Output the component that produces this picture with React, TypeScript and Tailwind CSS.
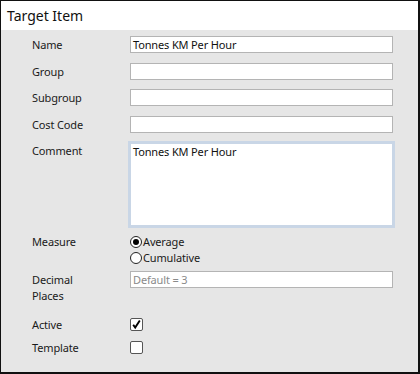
import React from "react";

const font = { fontFamily: '"Segoe UI", "Noto Sans", sans-serif' };

function Label({ children }: { children: React.ReactNode }) {
  return <div className="w-[98px] shrink-0 text-[11px] tracking-[-0.15px] leading-[17px] text-[#1a1a1a]">{children}</div>;
}

function TextInput({ value, placeholder }: { value?: string; placeholder?: string }) {
  return (
    <div className="w-[263px] h-[17px] border border-[#b4b4b4] bg-white px-[2px] text-[11px] tracking-[-0.15px] leading-[15px] text-[#111]">
      {value ? value : <span className="text-[#8a8a8a]">{placeholder}</span>}
    </div>
  );
}

function Radio({ checked, label }: { checked?: boolean; label: string }) {
  return (
    <div className="flex items-center h-[12px] text-[11px] tracking-[-0.15px] leading-[12px] text-[#1a1a1a]">
      <div className="w-[12px] h-[12px] rounded-full border border-[#222] bg-white flex items-center justify-center">
        {checked && <div className="w-[6px] h-[6px] rounded-full bg-black" />}
      </div>
      <span className="ml-[1px]">{label}</span>
    </div>
  );
}

function Checkbox({ checked }: { checked?: boolean }) {
  return (
    <div className="w-[13px] h-[13px] rounded-[2px] border border-[#555] bg-white flex items-center justify-center">
      {checked && (
        <svg width="11" height="11" viewBox="0 0 11 11">
          <path d="M2.2 5.8 L4.2 8.6 L8.8 1.6" fill="none" stroke="#000" strokeWidth="1.9" />
        </svg>
      )}
    </div>
  );
}

export default function App() {
  return (
    <div style={font} className="w-[420px] h-[374px] flex flex-col border-l border-t border-r-2 border-b-2 border-[#111] bg-[#e6e6e6]">
      <div className="h-[29px] bg-white pl-[6px] text-[14px] leading-[29px] text-[#111]">Target Item</div>
      <div className="flex flex-col pl-[31px] pt-[6px]">
        <div className="flex">
          <Label>Name</Label>
          <TextInput value="Tonnes KM Per Hour" />
        </div>
        <div className="flex mt-[10px]">
          <Label>Group</Label>
          <TextInput />
        </div>
        <div className="flex mt-[9px]">
          <Label>Subgroup</Label>
          <TextInput />
        </div>
        <div className="flex mt-[10px]">
          <Label>Cost Code</Label>
          <TextInput />
        </div>
        <div className="flex mt-[8px]">
          <div className="w-[96px] shrink-0 pt-[1px] text-[11px] tracking-[-0.15px] leading-[17px] text-[#1a1a1a]">Comment</div>
          <div className="w-[267px] h-[87px] border-[3px] border-[#c9d6e6] bg-white px-[2px] text-[11px] tracking-[-0.15px] leading-[16px] text-[#111]">
            Tonnes KM Per Hour
          </div>
        </div>
        <div className="flex mt-[7px]">
          <div className="w-[98px] shrink-0 pt-[1px] text-[11px] tracking-[-0.15px] leading-[12px] text-[#1a1a1a]">Measure</div>
          <div className="flex flex-col gap-[4px] pt-[1px]">
            <Radio checked label="Average" />
            <Radio label="Cumulative" />
          </div>
        </div>
        <div className="flex mt-[7px]">
          <div className="w-[98px] shrink-0 text-[11px] tracking-[-0.15px] leading-[16px] pt-[1px] text-[#1a1a1a]">
            Decimal
            <br />
            Places
          </div>
          <TextInput placeholder="Default = 3" />
        </div>
        <div className="flex mt-[12px] items-center">
          <Label>Active</Label>
          <Checkbox checked />
        </div>
        <div className="flex mt-[6px] items-center">
          <Label>Template</Label>
          <Checkbox />
        </div>
      </div>
    </div>
  );
}
